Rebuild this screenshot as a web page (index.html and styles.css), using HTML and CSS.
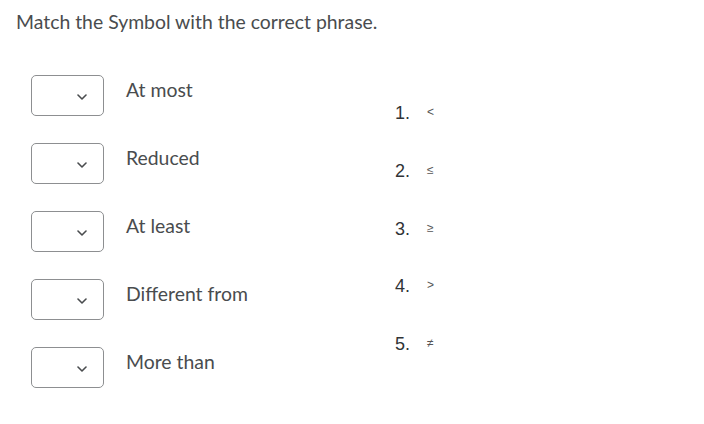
FILE: index.html
```html
<!DOCTYPE html>
<html>
<head>
<meta charset="utf-8">
<link rel="stylesheet" href="styles.css">
</head>
<body>
<div class="page">
  <p class="title">Match the Symbol with the correct phrase.</p>
  <div class="match">
    <div class="choices">
      <div class="row"><div class="sel"><svg class="chev" width="10" height="6" viewBox="0 0 10 6"><path d="M1 1 L5 5 L9 1" fill="none" stroke="#494c4e" stroke-width="1.6" stroke-linecap="round" stroke-linejoin="round"/></svg></div><span class="label">At most</span></div>
      <div class="row"><div class="sel"><svg class="chev" width="10" height="6" viewBox="0 0 10 6"><path d="M1 1 L5 5 L9 1" fill="none" stroke="#494c4e" stroke-width="1.6" stroke-linecap="round" stroke-linejoin="round"/></svg></div><span class="label">Reduced</span></div>
      <div class="row"><div class="sel"><svg class="chev" width="10" height="6" viewBox="0 0 10 6"><path d="M1 1 L5 5 L9 1" fill="none" stroke="#494c4e" stroke-width="1.6" stroke-linecap="round" stroke-linejoin="round"/></svg></div><span class="label">At least</span></div>
      <div class="row"><div class="sel"><svg class="chev" width="10" height="6" viewBox="0 0 10 6"><path d="M1 1 L5 5 L9 1" fill="none" stroke="#494c4e" stroke-width="1.6" stroke-linecap="round" stroke-linejoin="round"/></svg></div><span class="label">Different from</span></div>
      <div class="row"><div class="sel"><svg class="chev" width="10" height="6" viewBox="0 0 10 6"><path d="M1 1 L5 5 L9 1" fill="none" stroke="#494c4e" stroke-width="1.6" stroke-linecap="round" stroke-linejoin="round"/></svg></div><span class="label">More than</span></div>
    </div>
    <ol class="symbols">
      <li><span class="num">1.</span><span class="sym">&lt;</span></li>
      <li><span class="num">2.</span><span class="sym">≤</span></li>
      <li><span class="num">3.</span><span class="sym">≥</span></li>
      <li><span class="num">4.</span><span class="sym">&gt;</span></li>
      <li><span class="num">5.</span><span class="sym">≠</span></li>
    </ol>
  </div>
</div>
</body>
</html>
```

FILE: styles.css
```css
html, body {
  margin: 0;
  padding: 0;
  background: #ffffff;
}
.page {
  padding: 8px 0 0 16px;
  font-family: Lato, "Open Sans", sans-serif;
  color: #494c4e;
}
.title {
  margin: 0;
  font-size: 19.4px;
  line-height: 27px;
}
.match {
  display: flex;
  margin-top: 40px;
}
.choices {
  display: flex;
  flex-direction: column;
  gap: 27px;
  padding-left: 15px;
  width: 364px;
}
.row {
  display: flex;
  align-items: flex-start;
}
.sel {
  box-sizing: border-box;
  width: 73px;
  height: 41px;
  border: 1px solid #8d8f91;
  border-radius: 5px;
  display: flex;
  align-items: center;
  justify-content: flex-end;
  padding-right: 16px;
}
.chev {
  display: block;
  margin-top: 2px;
}
.label {
  margin-left: 22px;
  font-size: 19.4px;
  line-height: 28px;
  margin-top: 1px;
}
.symbols {
  list-style: none;
  margin: 0;
  padding: 0;
  margin-top: 28px;
  display: flex;
  flex-direction: column;
  gap: 36.75px;
}
.symbols li {
  display: flex;
  align-items: baseline;
  height: 21px;
}
.num {
  font-family: "Liberation Sans", Arial, sans-serif;
  font-size: 18px;
  color: #303336;
  width: 32px;
}
.sym {
  font-family: "Liberation Sans", Arial, sans-serif;
  font-size: 12px;
  color: #555;
  position: relative;
  top: -3px;
}
```
